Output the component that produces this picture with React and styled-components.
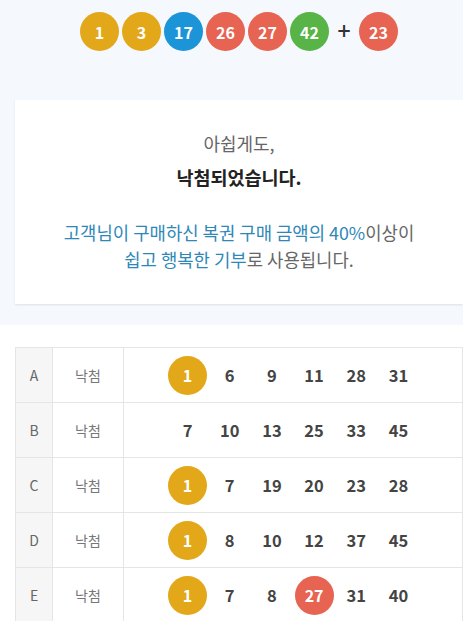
import React from "react";
import styled, { createGlobalStyle } from "styled-components";

const Global = createGlobalStyle`
  html, body {
    margin: 0;
    padding: 0;
    background: #ffffff;
  }
  body {
    font-family: "Noto Sans CJK KR", "Noto Sans", sans-serif;
    -webkit-font-smoothing: antialiased;
  }
`;

const BALL_COLORS = {
  yellow: "#e3a81a",
  blue: "#1c94d8",
  red: "#e76352",
  green: "#58b446",
};

const ballColor = (n) => {
  if (n <= 10) return BALL_COLORS.yellow;
  if (n <= 20) return BALL_COLORS.blue;
  if (n <= 30) return BALL_COLORS.red;
  if (n <= 40) return "#9a9a9a";
  return BALL_COLORS.green;
};

const Page = styled.div`
  width: 463px;
  overflow: hidden;
`;

const Summary = styled.section`
  background: #f5f9fe;
  padding: 12px 0 21px 15px;
`;

const BallRow = styled.div`
  display: flex;
  justify-content: center;
  align-items: center;
  gap: 3px;
  height: 39px;
`;

const Ball = styled.span`
  display: inline-flex;
  align-items: center;
  justify-content: center;
  width: ${(p) => p.$size}px;
  height: ${(p) => p.$size}px;
  border-radius: 50%;
  background: ${(p) => p.$color};
  color: #ffffff;
  font-weight: 700;
  font-size: 16px;
  line-height: 1;
  flex: none;
`;

const Plus = styled.span`
  width: 24px;
  text-align: center;
  font-size: 23px;
  font-weight: 500;
  color: #333333;
  line-height: 1;
  margin-top: -3px;
`;

const Card = styled.div`
  margin-top: 49px;
  background: #ffffff;
  box-shadow: 0 1px 2px rgba(0, 0, 0, 0.1);
  padding: 26px 0 30px;
  text-align: center;
  height: 204px;
  box-sizing: border-box;
`;

const Sorry = styled.div`
  font-size: 18px;
  line-height: 34px;
  color: #666666;
`;

const Result = styled.div`
  font-size: 18.5px;
  line-height: 34px;
  font-weight: 700;
  color: #222222;
`;

const Note = styled.p`
  margin: 25px 0 0;
  font-size: 17.8px;
  line-height: 27px;
  color: #666666;
`;

const Accent = styled.span`
  color: #2e88b7;
`;

const Games = styled.table`
  margin: 22px 0 0 15px;
  width: 448px;
  border-collapse: collapse;
  table-layout: fixed;
`;

const Row = styled.tr`
  height: 55px;
`;

const Cell = styled.td`
  border: 1px solid #e5e5e5;
  padding: 0;
  text-align: center;
  vertical-align: middle;
`;

const LetterCell = styled(Cell)`
  width: 36px;
  background: #f6f6f6;
  color: #666666;
  font-size: 14px;
`;

const StatusCell = styled(Cell)`
  width: 70px;
  color: #777777;
  font-size: 14px;
`;

const Numbers = styled.div`
  display: flex;
  justify-content: center;
  align-items: center;
`;

const Slot = styled.span`
  width: 42.2px;
  display: flex;
  justify-content: center;
  align-items: center;
  font-size: 16.5px;
  font-weight: 700;
  color: #444444;
`;

const winning = [1, 3, 17, 26, 27, 42];
const bonus = 23;

const games = [
  { id: "A", nums: [1, 6, 9, 11, 28, 31] },
  { id: "B", nums: [7, 10, 13, 25, 33, 45] },
  { id: "C", nums: [1, 7, 19, 20, 23, 28] },
  { id: "D", nums: [1, 8, 10, 12, 37, 45] },
  { id: "E", nums: [1, 7, 8, 27, 31, 40] },
];

export default function App() {
  return (
    <Page>
      <Global />
      <Summary>
        <BallRow>
          {winning.map((n) => (
            <Ball key={n} $size={39} $color={ballColor(n)}>
              {n}
            </Ball>
          ))}
          <Plus>+</Plus>
          <Ball $size={39} $color={ballColor(bonus)}>
            {bonus}
          </Ball>
        </BallRow>
        <Card>
          <Sorry>아쉽게도,</Sorry>
          <Result>낙첨되었습니다.</Result>
          <Note>
            <Accent>고객님이 구매하신 복권 구매 금액의 40%</Accent>이상이
            <br />
            <Accent>쉽고 행복한 기부</Accent>로 사용됩니다.
          </Note>
        </Card>
      </Summary>
      <Games>
        <tbody>
          {games.map((g) => (
            <Row key={g.id}>
              <LetterCell>{g.id}</LetterCell>
              <StatusCell>낙첨</StatusCell>
              <Cell>
                <Numbers>
                  {g.nums.map((n) => (
                    <Slot key={n}>
                      {winning.includes(n) ? (
                        <Ball $size={39} $color={ballColor(n)}>
                          {n}
                        </Ball>
                      ) : (
                        n
                      )}
                    </Slot>
                  ))}
                </Numbers>
              </Cell>
            </Row>
          ))}
        </tbody>
      </Games>
    </Page>
  );
}
